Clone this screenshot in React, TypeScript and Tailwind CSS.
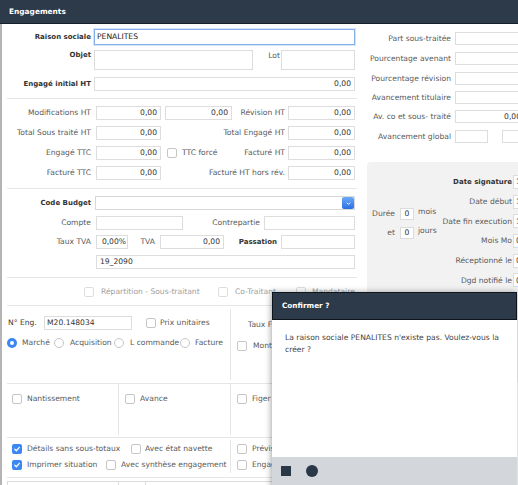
import React from "react";
import { twMerge } from "tailwind-merge";

type Kids = { children?: React.ReactNode; className?: string };

function Lbl({ children, className = "" }: Kids) {
  return (
    <span className={twMerge("shrink-0 whitespace-nowrap text-right text-[#5a5a5a]", className)}>
      {children}
    </span>
  );
}

function BLbl({ children, className = "" }: Kids) {
  return (
    <span
      className={twMerge(
        "shrink-0 whitespace-nowrap text-right text-[7px] font-bold text-[#333]",
        className,
      )}
    >
      {children}
    </span>
  );
}

function Input({ children, className = "", left }: Kids & { left?: boolean }) {
  return (
    <div
      className={twMerge(
        "flex h-[14px] shrink-0 items-center overflow-hidden whitespace-nowrap border border-[#dddddd] bg-white px-[3px] text-[#333]",
        left ? "justify-start" : "justify-end",
        className,
      )}
    >
      {children}
    </div>
  );
}

function Check({ on, dim, className = "" }: { on?: boolean; dim?: boolean; className?: string }) {
  if (on) {
    return (
      <span
        className={twMerge(
          "flex size-[10px] shrink-0 items-center justify-center rounded-[2px] bg-[#3b88f5]",
          className,
        )}
      >
        <svg viewBox="0 0 10 10" className="size-[8px]">
          <path
            d="M2.2 5.3 4.2 7.2 7.9 2.9"
            fill="none"
            stroke="#fff"
            strokeWidth="1.6"
            strokeLinecap="round"
            strokeLinejoin="round"
          />
        </svg>
      </span>
    );
  }
  return (
    <span
      className={twMerge(
        "size-[10px] shrink-0 rounded-[2px] border bg-white",
        dim ? "border-[#dedede]" : "border-[#c6c6c6]",
        className,
      )}
    />
  );
}

function Radio({ on }: { on?: boolean }) {
  if (on) {
    return (
      <span className="flex size-[10px] shrink-0 items-center justify-center rounded-full bg-[#3b88f5]">
        <span className="size-[4px] rounded-full bg-white" />
      </span>
    );
  }
  return <span className="size-[10px] shrink-0 rounded-full border border-[#c6c6c6] bg-white" />;
}

function Sep({ className = "" }: { className?: string }) {
  return <div className={twMerge("ml-[5px] h-px w-[350px] bg-[#e6e6e6]", className)} />;
}

function LeftCol() {
  return (
    <div className="w-[360px] shrink-0 pt-[5px]">
      <div className="flex h-[16px] items-center">
        <BLbl className="w-[89px]">Raison sociale</BLbl>
        <div className="ml-[3px] flex h-[16px] w-[261px] items-center border border-[#86b0ea] px-[2px] text-[#222] shadow-[0_0_0_1px_#d3e3f8]">
          PENALITES
        </div>
      </div>

      <div className="mt-[5px] flex h-[20px] items-start">
        <BLbl className="w-[89px] pt-[2px]">Objet</BLbl>
        <Input className="ml-[3px] h-[20px] w-[159px]" />
        <Lbl className="w-[28px] pr-[1px] pt-[2px]">Lot</Lbl>
        <Input className="h-[20px] w-[74px]" />
      </div>

      <div className="mt-[7px] flex h-[14px] items-center">
        <BLbl className="w-[89px]">Engagé initial HT</BLbl>
        <Input className="ml-[3px] w-[261px]">0,00</Input>
      </div>

      <Sep className="mt-[7px]" />

      <div className="mt-[7px] flex h-[14px] items-center">
        <Lbl className="w-[89px]">Modifications HT</Lbl>
        <Input className="ml-[5px] w-[65px]">0,00</Input>
        <div className="flex w-[124px] items-center">
          <Input className="ml-[4px] w-[67px]">0,00</Input>
          <Lbl className="flex-1">Révision HT</Lbl>
        </div>
        <Input className="ml-[3px] w-[67px]">0,00</Input>
      </div>

      <div className="mt-[6px] flex h-[14px] items-center">
        <Lbl className="w-[89px]">Total Sous traité HT</Lbl>
        <Input className="ml-[5px] w-[65px]">0,00</Input>
        <div className="flex w-[124px] items-center">
          <Lbl className="flex-1">Total Engagé HT</Lbl>
        </div>
        <Input className="ml-[3px] w-[67px]">0,00</Input>
      </div>

      <div className="mt-[6px] flex h-[14px] items-center">
        <Lbl className="w-[89px]">Engagé TTC</Lbl>
        <Input className="ml-[5px] w-[65px]">0,00</Input>
        <div className="flex w-[124px] items-center">
          <Check className="ml-[6px]" />
          <span className="ml-[5px] text-[#5a5a5a]">TTC forcé</span>
          <Lbl className="flex-1">Facturé HT</Lbl>
        </div>
        <Input className="ml-[3px] w-[67px]">0,00</Input>
      </div>

      <div className="mt-[6px] flex h-[14px] items-center">
        <Lbl className="w-[89px]">Facturé TTC</Lbl>
        <Input className="ml-[5px] w-[65px]">0,00</Input>
        <div className="flex w-[124px] items-center">
          <Lbl className="flex-1">Facturé HT hors rév.</Lbl>
        </div>
        <Input className="ml-[3px] w-[67px]">0,00</Input>
      </div>

      <Sep className="mt-[8px]" />

      <div className="mt-[7px] flex h-[14px] items-center">
        <BLbl className="w-[89px]">Code Budget</BLbl>
        <div className="ml-[4px] flex h-[14px] w-[260px] items-center justify-end border border-[#d8d8d8] bg-white">
          <span className="flex h-[12px] w-[12px] items-center justify-center rounded-[2px] bg-linear-to-b from-[#6aaaf8] to-[#2a6fe3]">
            <svg viewBox="0 0 10 10" className="size-[7px]">
              <path d="M2.5 3.8 5 6.3 7.5 3.8" stroke="#fff" strokeWidth="1.4" fill="none" />
            </svg>
          </span>
        </div>
      </div>

      <div className="mt-[6px] flex h-[14px] items-center">
        <Lbl className="w-[89px]">Compte</Lbl>
        <Input className="ml-[5px] w-[87px]" />
        <Lbl className="w-[77px]">Contrepartie</Lbl>
        <Input className="ml-[4px] w-[91px]" />
      </div>

      <div className="mt-[5px] flex h-[14px] items-center">
        <Lbl className="w-[89px]">Taux TVA</Lbl>
        <Input className="ml-[5px] w-[32px] px-[1px]">0,00%</Input>
        <Lbl className="w-[27px]">TVA</Lbl>
        <Input className="ml-[5px] w-[64px]">0,00</Input>
        <BLbl className="w-[53px]">Passation</BLbl>
        <Input className="ml-[4px] w-[74px]" />
      </div>

      <Input left className="ml-[94px] mt-[6px] w-[259px]">
        19_2090
      </Input>

      <Sep className="mt-[8px]" />

      <div className="mt-[9px] flex h-[10px] items-center text-[#a0a0a0]">
        <div className="ml-[82px] flex w-[134px] items-center">
          <Check dim />
          <span className="ml-[7px] whitespace-nowrap">Répartition - Sous-traitant</span>
        </div>
        <div className="flex w-[78px] items-center">
          <Check dim />
          <span className="ml-[7px]">Co-Traitant</span>
        </div>
        <div className="flex items-center">
          <Check dim />
          <span className="ml-[6px]">Mandataire</span>
        </div>
      </div>

      <Sep className="mt-[8px] w-[355px]" />

      <div className="flex h-[77px]">
        <div className="w-[228px] shrink-0 pl-[6px] pt-[10px]">
          <div className="flex h-[14px] items-center">
            <span className="w-[36px] text-[#3a3a3a]">N° Eng.</span>
            <Input left className="w-[88px] px-[2px]">
              M20.148034
            </Input>
            <Check className="ml-[14px]" />
            <span className="ml-[4px] text-[#5a5a5a]">Prix unitaires</span>
          </div>
          <div className="-ml-[1px] mt-[8px] flex h-[10px] items-center text-[#5a5a5a]">
            <div className="flex w-[47px] items-center">
              <Radio on />
              <span className="ml-[5px]">Marché</span>
            </div>
            <div className="flex w-[60px] items-center">
              <Radio />
              <span className="ml-[6px]">Acquisition</span>
            </div>
            <div className="flex w-[66px] items-center">
              <Radio />
              <span className="ml-[6px] whitespace-nowrap">L commande</span>
            </div>
            <div className="flex items-center">
              <Radio />
              <span className="ml-[5px]">Facture</span>
            </div>
          </div>
        </div>
        <div className="my-[3px] w-px bg-[#e6e6e6]" />
        <div className="pl-[6px] pt-[15px] text-[#5a5a5a]">
          <div className="pl-[11px]">Taux Frais</div>
          <div className="mt-[12px] flex items-center">
            <Check />
            <span className="ml-[6px]">Montant</span>
          </div>
        </div>
      </div>

      <Sep className="w-[355px]" />

      <div className="flex h-[53px] text-[#5a5a5a]">
        <div className="w-[116px] shrink-0 pl-[10px] pt-[10px]">
          <div className="flex h-[10px] items-center">
            <Check />
            <span className="ml-[5px]">Nantissement</span>
          </div>
        </div>
        <div className="mb-[2px] w-px bg-[#e6e6e6]" />
        <div className="w-[111px] shrink-0 pl-[6px] pt-[10px]">
          <div className="flex h-[10px] items-center">
            <Check />
            <span className="ml-[5px]">Avance</span>
          </div>
        </div>
        <div className="mb-[2px] w-px bg-[#e6e6e6]" />
        <div className="pl-[6px] pt-[10px]">
          <div className="flex h-[10px] items-center">
            <Check />
            <span className="ml-[5px]">Figer</span>
          </div>
        </div>
      </div>

      <Sep className="w-[355px]" />

      <div className="flex h-[39px] text-[#5a5a5a]">
        <div className="w-[228px] shrink-0 pl-[10px] pt-[6px]">
          <div className="flex h-[10px] items-center">
            <div className="flex w-[119px] items-center">
              <Check on />
              <span className="ml-[5px] whitespace-nowrap">Détails sans sous-totaux</span>
            </div>
            <Check />
            <span className="ml-[4px] whitespace-nowrap">Avec état navette</span>
          </div>
          <div className="mt-[6px] flex h-[10px] items-center">
            <div className="flex w-[94px] items-center">
              <Check on />
              <span className="ml-[5px] whitespace-nowrap">Imprimer situation</span>
            </div>
            <Check />
            <span className="ml-[5px] whitespace-nowrap">Avec synthèse engagement</span>
          </div>
        </div>
        <div className="mb-[4px] mt-[2px] w-px bg-[#e6e6e6]" />
        <div className="pl-[6px] pt-[6px]">
          <div className="flex h-[10px] items-center">
            <Check />
            <span className="ml-[5px]">Prévisionnel</span>
          </div>
          <div className="mt-[6px] flex h-[10px] items-center">
            <Check />
            <span className="ml-[5px]">Engagement</span>
          </div>
        </div>
      </div>

      <Sep className="w-[355px]" />

      <div className="ml-[5px] mt-[3px] flex h-[12px] border-l border-t border-[#dcdcdc]">
        <div className="w-[111px] border-r border-[#dcdcdc]" />
        <div className="w-[27px] border-r border-[#dcdcdc]" />
      </div>
    </div>
  );
}

function RightCol() {
  return (
    <div className="w-[200px] shrink-0 pt-[8px] text-[#5a5a5a]">
      <div className="flex h-[13px] items-center">
        <Lbl className="w-[89px]">Part sous-traitée</Lbl>
        <Input className="ml-[4px] h-[13px] w-[70px]" />
      </div>
      <div className="mt-[7px] flex h-[13px] items-center">
        <Lbl className="w-[89px]">Pourcentage avenant</Lbl>
        <Input className="ml-[4px] h-[13px] w-[70px]" />
      </div>
      <div className="mt-[7px] flex h-[13px] items-center">
        <Lbl className="w-[89px]">Pourcentage révision</Lbl>
        <Input className="ml-[4px] h-[13px] w-[70px]" />
      </div>
      <div className="mt-[6px] flex h-[13px] items-center">
        <Lbl className="w-[89px]">Avancement titulaire</Lbl>
        <Input className="ml-[4px] h-[13px] w-[70px]" />
      </div>
      <div className="mt-[6px] flex h-[13px] items-center">
        <Lbl className="w-[89px]">Av. co et sous- traité</Lbl>
        <Input className="ml-[4px] h-[13px] w-[70px]">0,00</Input>
      </div>
      <div className="mt-[7px] flex h-[13px] items-center">
        <Lbl className="w-[89px]">Avancement global</Lbl>
        <Input className="ml-[4px] h-[13px] w-[33px]" />
        <Input className="ml-[14px] h-[13px] w-[33px]" />
      </div>

      <div className="ml-[5px] mt-[19px] flex h-[220px] rounded-[4px] bg-[#f2f2f2]">
        <div className="w-[73px] shrink-0 pl-[3px] pt-[46px]">
          <div className="flex h-[12px] items-start">
            <span className="w-[25px] text-right leading-[12px]">Durée</span>
            <div className="ml-[5px] flex h-[12px] w-[14px] items-center justify-center border border-[#dcdcdc] bg-white text-[#333]">
              0
            </div>
            <span className="ml-[4px] leading-[8px]">mois</span>
          </div>
          <div className="mt-[7px] flex h-[12px] items-start">
            <span className="w-[25px] text-right leading-[12px]">et</span>
            <div className="ml-[5px] flex h-[12px] w-[14px] items-center justify-center border border-[#dcdcdc] bg-white text-[#333]">
              0
            </div>
            <span className="ml-[4px] leading-[8px]">jours</span>
          </div>
        </div>
        <div className="flex flex-col gap-[5.7px] pt-[13px]">
          <div className="flex h-[14px] items-center">
            <BLbl className="w-[73px] pr-[1px]">Date signature</BLbl>
            <Input left className="w-[40px] px-[2px]">10/02/2020</Input>
          </div>
          <div className="flex h-[14px] items-center">
            <Lbl className="w-[73px] pr-[1px]">Date début</Lbl>
            <Input left className="w-[40px] px-[2px]">10/02/2020</Input>
          </div>
          <div className="flex h-[14px] items-center">
            <Lbl className="w-[73px] pr-[1px]">Date fin execution</Lbl>
            <Input left className="w-[40px] px-[2px]">10/02/2020</Input>
          </div>
          <div className="flex h-[14px] items-center">
            <Lbl className="w-[73px] pr-[1px]">Mois Mo</Lbl>
            <Input left className="w-[40px] px-[2px]">02/2020</Input>
          </div>
          <div className="flex h-[14px] items-center">
            <Lbl className="w-[73px] pr-[1px]">Réceptionné le</Lbl>
            <Input left className="w-[40px] px-[2px]">00/00/0000</Input>
          </div>
          <div className="flex h-[14px] items-center">
            <Lbl className="w-[73px] pr-[1px]">Dgd notifié le</Lbl>
            <Input left className="w-[40px] px-[2px]">00/00/0000</Input>
          </div>
        </div>
      </div>
    </div>
  );
}

function Dialog() {
  return (
    <div className="absolute left-[272px] top-[292px] flex h-[200px] w-[245px] flex-col bg-white shadow-[-1px_0_6px_rgba(0,0,0,0.35)]">
      <div className="flex h-[28px] shrink-0 items-center border border-[#0f151c] bg-[#2c3a4a] pl-[9px] text-[7.3px] font-bold text-white">
        Confirmer ?
      </div>
      <div className="h-[137px] shrink-0 pl-[13px] pt-[12px] leading-[12px] text-[#444]">
        La raison sociale PENALITES n'existe pas. Voulez-vous la
        <br />
        créer ?
      </div>
      <div className="flex flex-1 items-start bg-[#d3d6da] pl-[9px] pt-[8px]">
        <span className="mt-[1px] size-[10px] bg-[#2a3747]" />
        <span className="ml-[15px] size-[12px] rounded-full bg-[#2a3747]" />
      </div>
    </div>
  );
}

export default function App() {
  return (
    <div className="relative h-[485px] w-[518px] overflow-hidden bg-white font-['DejaVu_Sans',sans-serif] text-[7.6px] leading-none">
      <div className="flex h-[24px] items-center border-b border-[#17202a] bg-[#2c3a4a] pl-[9px] text-[7.4px] font-bold text-white">
        Engagements
      </div>
      <div className="flex h-[461px] border-l-2 border-[#b4b4b4]">
        <LeftCol />
        <RightCol />
      </div>
      <Dialog />
    </div>
  );
}
